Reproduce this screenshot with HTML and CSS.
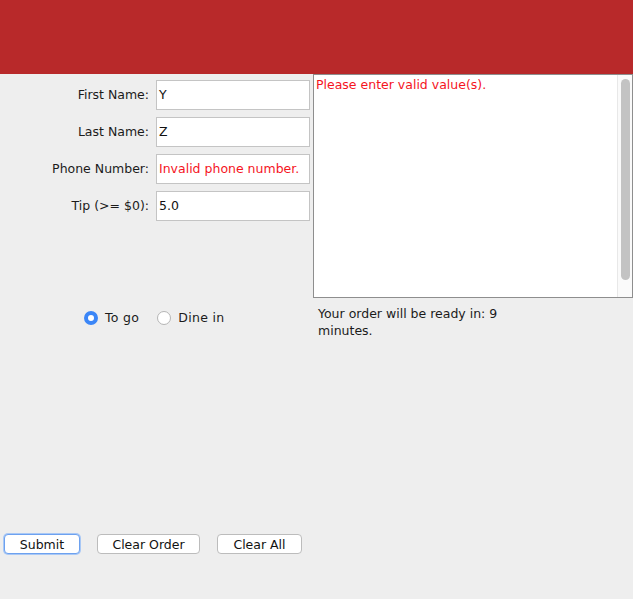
FILE: index.html
```html
<!DOCTYPE html>
<html>
<head>
<meta charset="utf-8">
<link rel="stylesheet" href="styles.css">
</head>
<body>
<div class="page">
  <header class="banner"></header>
  <div class="main">
    <div class="left">
      <div class="form">
        <label class="lbl">First Name:</label>
        <div class="field">Y</div>
        <label class="lbl">Last Name:</label>
        <div class="field">Z</div>
        <label class="lbl">Phone Number:</label>
        <div class="field error">Invalid phone number.</div>
        <label class="lbl">Tip (&gt;= $0):</label>
        <div class="field">5.0</div>
      </div>
      <div class="radios">
        <div class="radio"><span class="dot on"></span><span>To go</span></div>
        <div class="radio"><span class="dot"></span><span>Dine in</span></div>
      </div>
    </div>
    <div class="right">
      <div class="textarea">
        <div class="ta-text">Please enter valid value(s).</div>
        <div class="scroll"><div class="thumb"></div></div>
      </div>
      <div class="msg">Your order will be ready in: 9 minutes.</div>
    </div>
  </div>
  <div class="buttons">
    <button class="btn focus">Submit</button>
    <button class="btn">Clear Order</button>
    <button class="btn">Clear All</button>
  </div>
</div>
</body>
</html>
```

FILE: styles.css
```css
html, body {
  margin: 0;
  padding: 0;
  background: #eeeeee;
}
body {
  font-family: "DejaVu Sans", "Liberation Sans", sans-serif;
  font-size: 12.5px;
  color: #1b1b1b;
  width: 633px;
  height: 599px;
  overflow: hidden;
}
.banner {
  height: 74px;
  background: #b8292a;
}
.main {
  display: flex;
}
.left {
  width: 313px;
}
.form {
  display: grid;
  grid-template-columns: 149px 154px;
  column-gap: 7px;
  row-gap: 7px;
  padding-top: 6px;
}
.lbl {
  text-align: right;
  line-height: 29px;
}
.field {
  height: 28px;
  border: 1px solid #c4c4c4;
  background: #fff;
  line-height: 27px;
  padding-left: 2px;
  color: #111;
}
.field.error {
  color: #f5141e;
}
.radios {
  display: flex;
  align-items: center;
  margin-top: 89px;
  padding-left: 84px;
  gap: 18px;
}
.radio {
  display: flex;
  align-items: center;
  gap: 7px;
  letter-spacing: 0.3px;
}
.dot {
  width: 14px;
  height: 14px;
  border-radius: 50%;
  border: 1px solid #b5b5b5;
  background: #fff;
  box-sizing: border-box;
}
.dot.on {
  border: 4.5px solid #3b86f7;
  background: #fff;
}
.right {
  width: 320px;
}
.textarea {
  height: 224px;
  border: 1px solid #8e8e8e;
  box-sizing: border-box;
  background: #fff;
  display: flex;
  justify-content: space-between;
}
.ta-text {
  color: #f5141e;
  padding: 2px 0 0 2px;
}
.scroll {
  width: 14px;
  border-left: 1px solid #e8e8e8;
  background: #fafafa;
  display: flex;
  justify-content: center;
  padding-top: 4px;
}
.thumb {
  width: 9px;
  height: 201px;
  border-radius: 5px;
  background: #c3c3c3;
}
.msg {
  width: 200px;
  padding: 7px 0 0 5px;
  line-height: 17px;
}
.buttons {
  display: flex;
  gap: 17px;
  padding-left: 4px;
  margin-top: 194px;
}
.btn {
  font-family: "DejaVu Sans", "Liberation Sans", sans-serif;
  font-size: 12.5px;
  color: #111;
  background: #fff;
  border: 1px solid #bcbcbc;
  border-radius: 4px;
  height: 20px;
  padding: 0;
  margin-top: 1px;
}
.btn:nth-child(1) { width: 76px; }
.btn:nth-child(2) { width: 103px; }
.btn:nth-child(3) { width: 85px; }
.btn.focus {
  border: 1px solid #6da1ef;
  box-shadow: 0 0 0 1px #a9c8f5;
}
```
